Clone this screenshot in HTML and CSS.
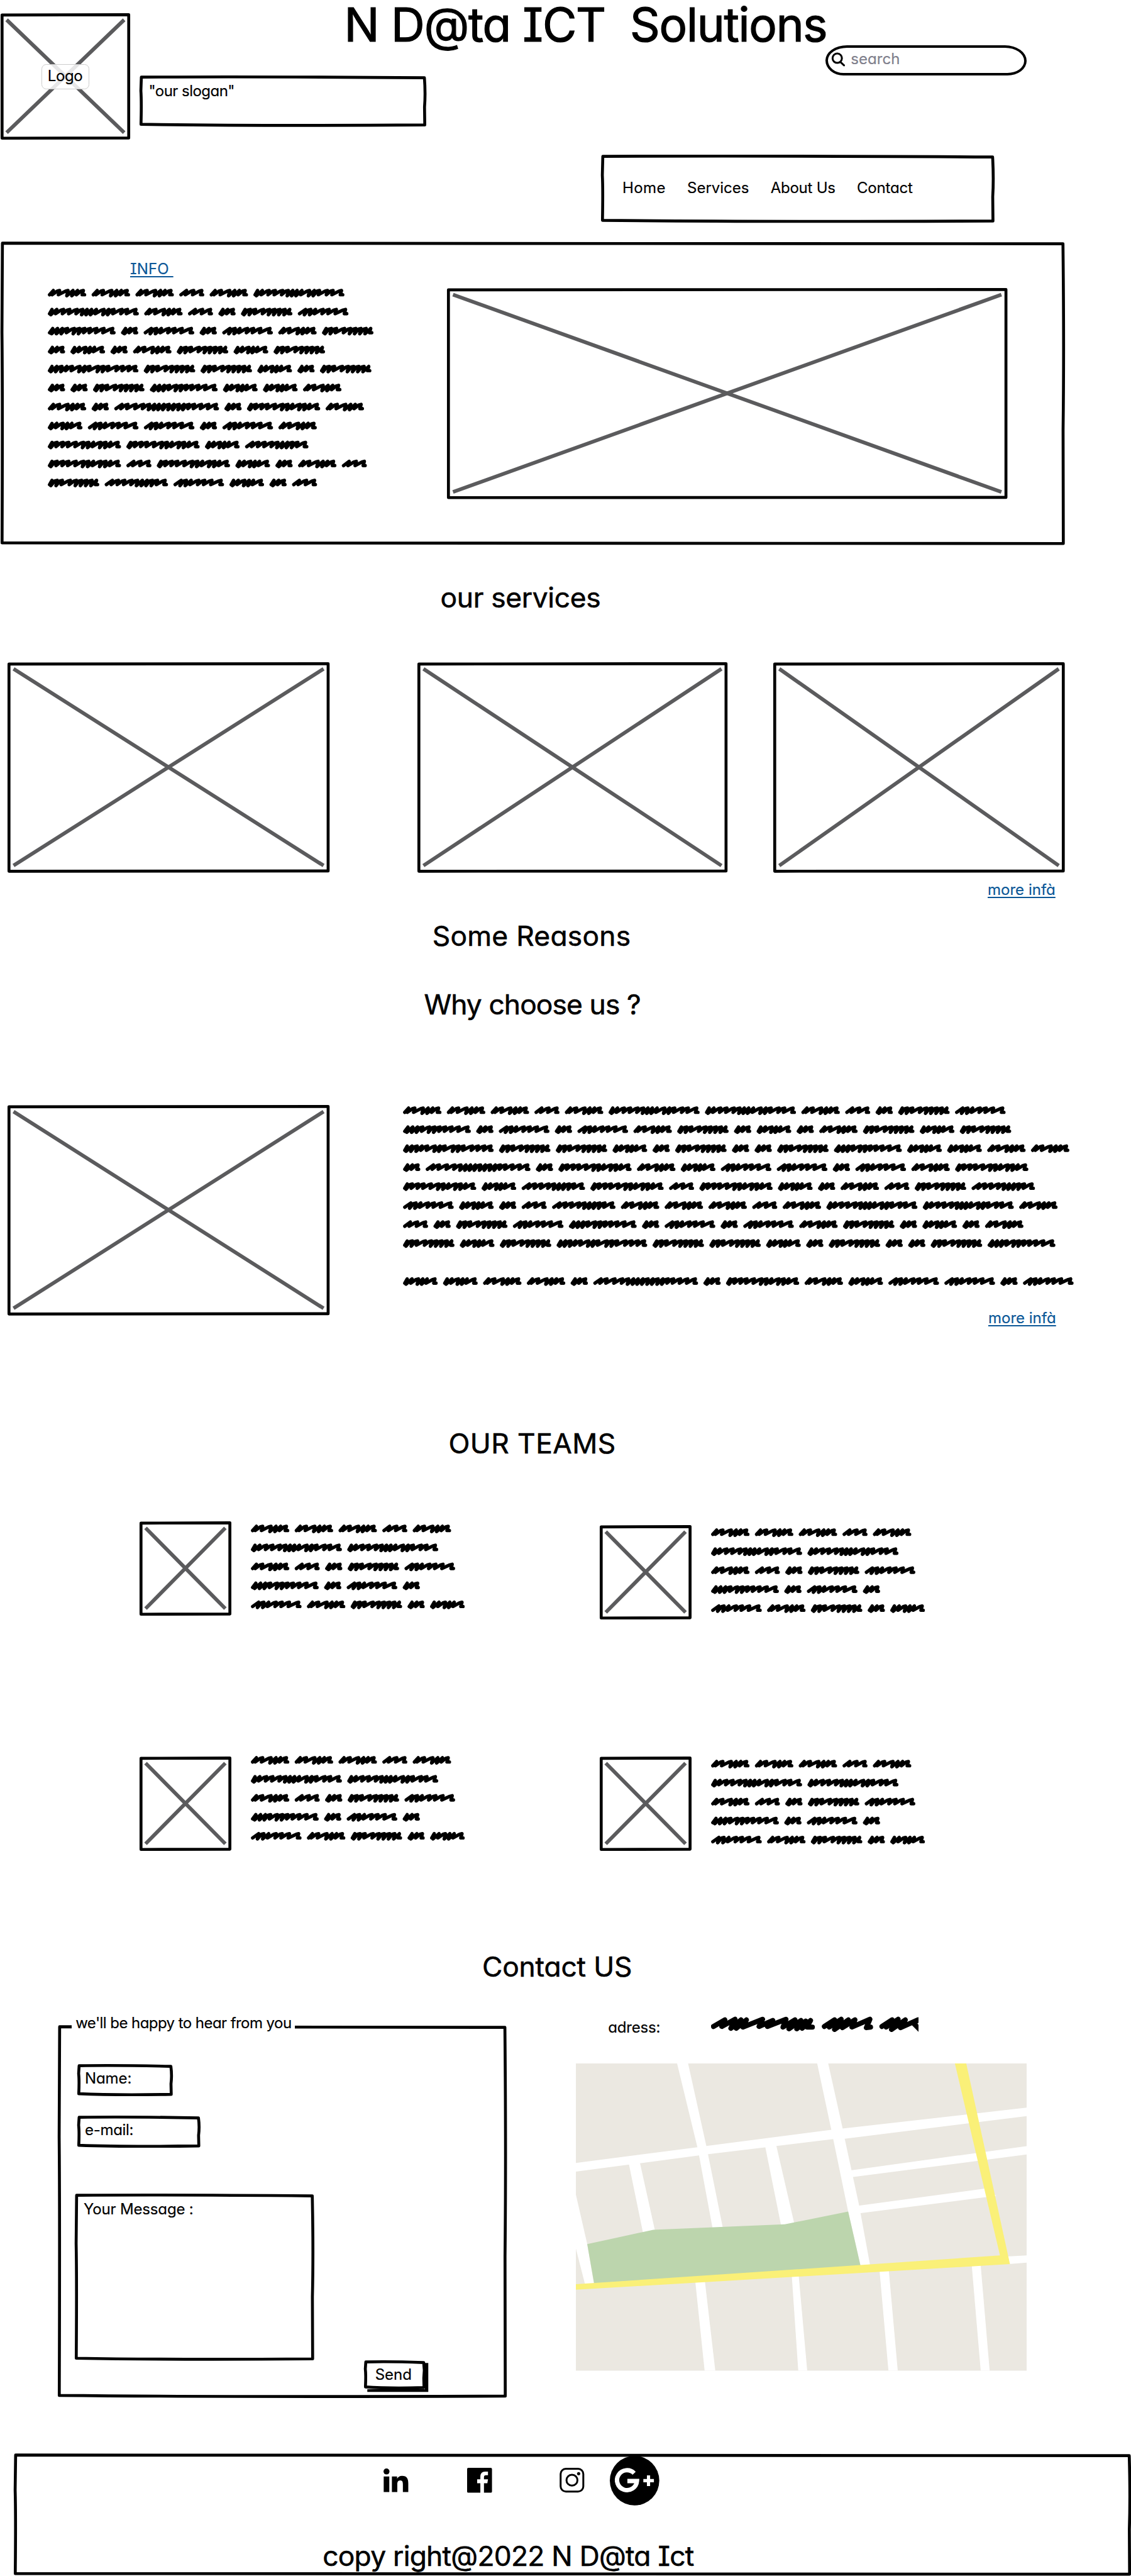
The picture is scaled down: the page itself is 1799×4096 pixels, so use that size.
FILE: index.html
```html
<!DOCTYPE html>
<html lang="en">
<head>
<meta charset="utf-8">
<title>N D@ta ICT Solutions</title>
<link rel="stylesheet" href="styles.css">
</head>
<body>
<header class="header">
  <div class="image logo"><span class="logo-label"><span data-fit="58">Logo</span></span></div>
  <div class="header-main">
    <div class="header-top">
      <h1 class="title"><span data-fit="805">N D@ta ICT&nbsp; Solutions</span></h1>
      <div class="search">
        <svg class="search-icon" viewBox="0 0 24 24"><circle cx="10.2" cy="10" r="7.8"/><path d="M15.5 16.5L21.5 22"/></svg>
        <span data-fit="82">search</span>
      </div>
    </div>
    <div class="frame slogan"><span data-fit="143">"our slogan"</span></div>
    <nav class="frame nav">
      <a data-fit="72">Home</a><a data-fit="103">Services</a><a data-fit="108">About Us</a><a data-fit="93">Contact</a>
    </nav>
  </div>
</header>

<section class="frame hero">
  <div class="hero-text">
    <a class="link info"><span data-fit="72">INFO&nbsp;</span></a>
    <svg class="scribble" data-lines="AAABAD/DABCEF/GCFCFAE/CHCAEHE/IEEHCE/CCEGHHA/ACJCKA/HFFCFA/KKHL/KBKHCAB/ELFHCB"></svg>
  </div>
  <div class="image hero-image"></div>
</section>

<section class="services">
  <h2 class="heading services-title"><span data-fit="267">our services</span></h2>
  <div class="service-row">
    <div class="image service-a"></div>
    <div class="image service-b"></div>
    <div class="image service-c"></div>
  </div>
  <a class="link more-services"><span data-fit="113">more infà</span></a>
</section>

<section class="reasons">
  <h2 class="heading reasons-title"><span data-fit="331">Some Reasons</span></h2>
  <h2 class="heading why-title"><span data-fit="361">Why choose us ?</span></h2>
  <div class="reason-row">
    <div class="image reason-image"></div>
    <div class="reason-text">
      <svg class="scribble" data-lines="AAABADDABCEF/GCFCFAECHCAEHE/IEEHCECCEGHHAA/CJCKAHFFCFAK/KHLKBKHCABEL/FHCBLAAABADDA/BCEFGCFCFAECHCA/EHEIEEHCECCEG//HHAACJCKAHFFCF"></svg>
      <a class="link more-reasons"><span data-fit="113">more infà</span></a>
    </div>
  </div>
</section>

<section class="teams">
  <h2 class="heading teams-title"><span data-fit="279">OUR TEAMS</span></h2>
  <div class="team-grid">
    <div class="member"><div class="image portrait"></div><svg class="scribble" data-lines="AAABA/DD/ABCEF/GCFC/FAECH"></svg></div>
    <div class="member member-low"><div class="image portrait"></div><svg class="scribble" data-lines="AAABA/DD/ABCEF/GCFC/FAECH"></svg></div>
    <div class="member member-raised"><div class="image portrait"></div><svg class="scribble" data-lines="AAABA/DD/ABCEF/GCFC/FAECH"></svg></div>
    <div class="member"><div class="image portrait"></div><svg class="scribble" data-lines="AAABA/DD/ABCEF/GCFC/FAECH"></svg></div>
  </div>
</section>

<section class="contact">
  <h2 class="heading contact-title"><span data-fit="250">Contact US</span></h2>
  <div class="contact-row">
    <form class="frame form">
      <div class="legend"><span data-fit="360">we'll be happy to hear from you</span></div>
      <div class="frame field name"><span data-fit="78">Name:</span></div>
      <div class="frame field email"><span data-fit="81">e-mail:</span></div>
      <div class="frame message"><span data-fit="183">Your Message :</span></div>
      <div class="frame send"><span data-fit="61">Send</span></div>
    </form>
    <div class="place">
      <div class="address">
        <span class="address-label"><span data-fit="87">adress:</span></span>
        <svg class="address-scribble" viewBox="0 0 346 26"><path d="M4 17L23 6L18 17L40 5L33 20L50 6L42 20L59 6L53 18L86 5L80 17L103 7L94 17L125 5L120 18L140 6L130 21L150 7L143 21L158 8L152 20L166 7L160 18L169 18M189 17L206 6L197 18L217 5L206 22L229 6L219 19L240 6L235 18L265 5L259 19L266 18M285 17L302 6L292 18L312 5L301 22L324 6L316 19L345 6L338 12L350 24"/></svg>
      </div>
      <svg class="map" viewBox="105 454 1310 1056" preserveAspectRatio="none">
        <path class="land" d="M105 454H1415V1510H105z"/>
        <g class="road">
          <path d="M105 796L458 742L484 738L847 682L880 678L1415 606V635L886 713L853 714L688 738L490 766L105 826z"/>
          <path d="M399 454H431L484 738L532 1020L502 1020L464 778L458 742z"/>
          <path d="M806 454H838L880 678L886 713L928 943L960 1150H932L896 963L847 682z"/>
          <path d="M105 905L138 1075L158 1215H132L105 1090z"/>
          <path d="M259 800L291 795L335 1030L300 1036z"/>
          <path d="M655 740L687 735L739 1002L701 1010z"/>
          <path d="M900 822L1415 738V767L900 846z"/>
          <path d="M922 944L1300 883L1326 909L922 970z"/>
          <path d="M452 1205H480L510 1510H479z"/>
          <path d="M732 1180H752L777 1510H751z"/>
          <path d="M987 1165H1014L1040 1510H1013z"/>
          <path d="M1255 1148H1281L1307 1510H1281z"/>
          <path d="M1355 1118L1415 1114V1139L1362 1144z"/>
        </g>
        <path class="park" d="M138 1075L330 1026L712 1007L896 963L932 1150L158 1210z"/>
        <path class="highway" d="M1206 454H1239L1366 1144L105 1232V1213L932 1147L1337 1114z"/>
      </svg>
    </div>
  </div>
</section>

<footer class="frame footer">
  <div class="social">
    <svg class="linkedin" viewBox="87 100 126 120"><circle cx="102" cy="115" r="15"/><path d="M88 140h28v78h-28zM129 140h26v11c5-8 13-14 25-14 24 0 31 14 31 38v43h-27v-38c0-11-2-20-13-20-12 0-15 9-15 20v38h-27z"/></svg>
    <svg class="facebook" viewBox="507 99 124 124"><path d="M513 99h112q6 0 6 6v112q0 6-6 6h-34v-47h17l3-20h-20v-10q0-10 10-10h10v-18h-14q-24 0-24 26v12h-16v20h16v47h-60q-6 0-6-6v-112q0-6 6-6z"/></svg>
    <svg class="instagram" viewBox="968 99 125 125"><rect x="973.5" y="104" width="114" height="114" rx="26"/><circle cx="1030.5" cy="161" r="27.5"/><circle class="dot" cx="1064" cy="128" r="8"/></svg>
    <svg class="google" viewBox="1218 40 248 248"><circle cx="1342" cy="164" r="124"/><path d="M1340 127A50 50 0 1 0 1354 166H1306"/><path class="plus" d="M1386 164h53M1412 138v53"/></svg>
  </div>
  <div class="heading copyright"><span data-fit="619">copy right@2022 N D@ta Ict</span></div>
</footer>
<script src="script.js"></script>
</body>
</html>
```
FILE: styles.css
```css
/* 1rem is ten design units */
html { font-size: 9.5387px; }
* { box-sizing: border-box; }
body {
  margin: 0;
  width: 188.6rem;
  height: 429.4rem;
  overflow: hidden;
  background: #fff;
  color: #000;
  font-family: Inter, "Open Sans", sans-serif;
  font-size: 2.52rem;
  font-weight: 400;
  line-height: 3rem;
  font-feature-settings: "cv11", "cv08";
  white-space: nowrap;
  -webkit-text-stroke: .02rem;
}
h1, h2 { margin: 0; }
[data-fit] { display: inline-block; white-space: pre; }
svg { display: block; flex: none; overflow: visible; }

.frame, .image { position: relative; flex: none; }
.outline {
  position: absolute;
  inset: 0;
  width: 100%;
  height: 100%;
  fill: none;
  stroke: #000;
  stroke-width: 4.9;
  stroke-linejoin: round;
  pointer-events: none;
}
.outline .cross { stroke: #5b5b5d; stroke-width: 6.2; }
.heading { font-size: 4.65rem; font-weight: 400; line-height: 5.6rem; -webkit-text-stroke: .06rem; }
.link {
  display: block;
  color: #0b5797;
  text-decoration: underline;
  text-decoration-thickness: .22rem;
  text-underline-offset: .36rem;
  text-decoration-skip-ink: none;
}
.link span { text-decoration: inherit; }
.scribble, .address-scribble path {
  fill: none;
  stroke: #000;
  stroke-linecap: round;
  stroke-linejoin: round;
}
.scribble { stroke-width: 5.7; }

.header { display: flex; height: 40.2rem; }
.logo {
  display: flex;
  align-items: center;
  justify-content: center;
  width: 21.6rem;
  height: 21.1rem;
  margin: 2.25rem 0 0 .1rem;
}
.logo-label {
  position: relative;
  z-index: 1;
  height: 4.2rem;
  width: 8rem;
  padding: .4rem 0 0 .95rem;
  border: .2rem solid #ccc;
  border-radius: .8rem;
  background: rgba(255, 255, 255, .85);
}
.header-top { display: flex; height: 12.6rem; }
.title {
  width: 80.2rem;
  margin: -.27rem 0 0 35.7rem;
  font-size: 7.8rem;
  font-weight: 400;
  line-height: 9rem;
  -webkit-text-stroke: .13rem;
}
.search {
  display: flex;
  width: 33.6rem;
  height: 5rem;
  margin-top: 7.6rem;
  padding: .35rem 0 0 .6rem;
  border: .42rem solid #000;
  border-radius: 3.6rem 3.6rem 3.2rem 3rem / 2.5rem 2.6rem 2.4rem 2.5rem;
  color: #80808c;
}
.search-icon {
  width: 2.4rem;
  height: 2.4rem;
  margin: .38rem .85rem 0 0;
  fill: none;
  stroke: #000;
  stroke-width: 3.2;
  stroke-linecap: round;
}
.slogan { width: 47.8rem; height: 8.5rem; margin-left: 1.6rem; padding: 1.18rem 0 0 1.5rem; }
.nav {
  display: flex;
  gap: 3.6rem;
  width: 65.6rem;
  height: 11.3rem;
  margin: 4.7rem 0 0 78.5rem;
  padding: 4.04rem 0 0 3.6rem;
}

.hero { display: flex; width: 177.45rem; height: 50.6rem; margin: .05rem 0 0 .1rem; }
.hero-text { width: 74.4rem; padding: 3.14rem 0 0 7.9rem; }
.info { margin: 0 0 .94rem 13.7rem; }
.hero-image { width: 93.45rem; height: 35.2rem; margin-top: 7.75rem; }

.services-title { margin: 6.06rem 0 0 73.45rem; }
.service-row { display: flex; margin-top: 7.89rem; }
.service-row .image { height: 35.1rem; }
.service-a { width: 53.7rem; margin-left: 1.3rem; }
.service-b { width: 51.7rem; margin-left: 14.6rem; }
.service-c { width: 48.6rem; margin-left: 7.7rem; }
.more-services { margin: 1.35rem 0 0 164.7rem; }

.reasons-title { margin: 3.46rem 0 0 72.1rem; }
.why-title { margin: 5.83rem 0 0 70.7rem; }
.reason-row { display: flex; height: 36.98rem; margin-top: 13.87rem; }
.reason-image { width: 53.7rem; height: 35.1rem; margin-left: 1.3rem; }
.reason-text { margin: -.65rem 0 0 12.2rem; }
.more-reasons { margin: 3.03rem 0 0 97.6rem; }

.teams-title { margin: 16.72rem 0 0 74.8rem; }
.team-grid {
  display: grid;
  grid-template: 39.2rem 15.75rem / 76.75rem 60rem;
  margin: 10.1rem 0 0 23.3rem;
}
.member { display: flex; }
.member-low { padding-top: .6rem; }
.portrait { width: 15.3rem; height: 15.75rem; }
.member .scribble { margin: -.28rem 0 0 3.2rem; }
.member-raised .scribble { margin-top: -.92rem; }

.contact-title { margin: 16.53rem 0 0 80.4rem; }
.contact-row { display: flex; height: 62.1rem; margin-top: 6.92rem; }
.form { width: 74.85rem; height: 62.1rem; margin-left: 9.65rem; padding-top: 6.45rem; }
.legend {
  position: absolute;
  z-index: 1;
  top: -1.79rem;
  left: 2.35rem;
  width: 37.15rem;
  padding-left: .6rem;
  background: #fff;
}
.field { height: 5.3rem; margin-left: 3.2rem; padding: .96rem 0 0 1.3rem; }
.name { width: 15.9rem; }
.email { width: 20.5rem; margin-top: 3.3rem; }
.message { width: 39.9rem; height: 27.8rem; margin: 7.75rem 0 0 2.8rem; padding: 1.1rem 0 0 1.5rem; }
.send {
  width: 10.25rem;
  height: 4.8rem;
  margin-left: 51rem;
  padding: .9rem 0 0 1.9rem;
  background: #fff;
  box-shadow: .55rem .45rem 0 #000;
}
.place { margin-left: 11.5rem; }
.address { display: flex; height: 6.4rem; }
.address-label { width: 17.2rem; margin: -1.03rem 0 0 5.4rem; }
.address-scribble {
  width: 34.6rem;
  height: 2.6rem;
  margin-top: -1.5rem;
  overflow: hidden;
}
.address-scribble path { stroke-width: 8.4; }
.map { width: 75.2rem; height: 51.2rem; overflow: hidden; }
.land { fill: #ebe8e1; }
.road { fill: #fff; }
.park { fill: #bcd5ad; }
.highway { fill: #faf078; }

.footer { width: 186.3rem; height: 20.4rem; margin: 9.3rem 0 0 2.3rem; padding-top: .35rem; }
.social { display: flex; align-items: center; height: 8.25rem; margin-left: 61.6rem; }
.linkedin { width: 4.2rem; height: 4rem; }
.facebook { width: 4.15rem; height: 4.15rem; margin-left: 9.8rem; }
.instagram { width: 4.15rem; height: 4.15rem; margin-left: 11.25rem; fill: none; stroke: #000; stroke-width: 9.5; }
.instagram .dot { fill: #000; stroke: none; }
.google { width: 8.25rem; height: 8.25rem; margin-left: 4.2rem; }
.google path { fill: none; stroke: #fff; stroke-width: 22; }
.google .plus { stroke-width: 16; }
.copyright { margin: 5.7rem 0 0 51.5rem; }
```
FILE: script.js
```js
const NS = 'http://www.w3.org/2000/svg';
const UNIT = parseFloat(getComputedStyle(document.documentElement).fontSize) / 10;

// Word shapes: [width, peak positions], in thirds of a design unit.
const WORDS = {
  A: [193, 31, 62, 104, 129, 152, 181],
  B: [126, 40, 76, 116],
  C: [87, 26, 50, 78],
  D: [456, 24, 48, 82, 113, 150, 178, 200, 222, 246, 284, 308, 334, 374, 402, 444],
  E: [258, 24, 50, 76, 116, 146, 172, 198, 224, 247],
  F: [254, 42, 68, 92, 130, 160, 196, 242],
  G: [340, 28, 52, 76, 102, 136, 162, 188, 216, 248, 284, 328],
  H: [174, 24, 48, 80, 102, 124, 163],
  I: [454, 24, 48, 74, 98, 126, 164, 188, 214, 256, 282, 308, 350, 380, 412, 443],
  J: [525, 42, 72, 112, 150, 180, 205, 228, 252, 278, 302, 328, 352, 378, 405, 440, 476, 514],
  K: [367, 24, 50, 80, 108, 145, 182, 208, 232, 268, 294, 318, 355],
  L: [318, 42, 72, 104, 140, 168, 192, 216, 242, 268, 306]
};
const GAP = 8.7;
const LINE = 31.65;

function wordPath(code, x, y) {
  const [width, ...peaks] = WORDS[code];
  const at = (px, py) => (x + px / 3).toFixed(1) + ' ' + (y + py / 3).toFixed(1);
  let d = 'M' + at(9, 8);
  let low = 9;
  peaks.forEach((p, i) => {
    const next = peaks[i + 1] || width;
    if (p - low > 34) d += 'L' + at(p - 15, -10);
    d += 'L' + at(p - 3, -13);
    low = Math.max(9, p - 9);
    d += 'L' + at(low, next - p < 27 && i < peaks.length - 1 ? 13 : 8);
  });
  return d + 'L' + at(width - 9, 8);
}

document.querySelectorAll('.scribble').forEach(svg => {
  const lines = svg.dataset.lines.split('/');
  let d = '', max = 0;
  lines.forEach((line, row) => {
    let x = 0;
    for (const code of line) {
      d += wordPath(code, x, (row + 0.5) * LINE);
      x += WORDS[code][0] / 3 + GAP;
    }
    max = Math.max(max, x - GAP);
  });
  const height = lines.length * LINE;
  svg.setAttribute('viewBox', `0 0 ${max} ${height}`);
  svg.setAttribute('width', max * UNIT);
  svg.setAttribute('height', height * UNIT);
  const path = document.createElementNS(NS, 'path');
  path.setAttribute('d', d);
  svg.append(path);
});

// Hand-drawn outlines, with a cross for image placeholders.
document.querySelectorAll('.frame, .image').forEach(box => {
  const r = box.getBoundingClientRect();
  const w = r.width / UNIT, h = r.height / UNIT;
  const svg = document.createElementNS(NS, 'svg');
  svg.setAttribute('class', 'outline');
  svg.setAttribute('viewBox', `0 0 ${w} ${h}`);
  svg.innerHTML = box.classList.contains('image')
    ? `<path class="cross" d="M10 11L${w - 10} ${h - 12}M${w - 10} 11L10 ${h - 12}"/>
       <path d="M2.4 3L${w - 2.4} 2.4V${h - 3}L2.4 ${h - 2.6}z"/>`
    : `<path d="M3 2.8Q${w * .4} 1.6 ${w - 3} 3.8Q${w - 1} ${h * .35} ${w - 2.8} ${h * .62}L${w - 2.4} ${h - 2.5}Q${w * .4} ${h - .8} 2.4 ${h - 3.6}Q3.4 ${h * .5} 2.2 ${h * .3}z"/>`;
  box.prepend(svg);
});

// Spread each label over its design width.
document.querySelectorAll('[data-fit]').forEach(el => {
  const gap = (el.dataset.fit * UNIT - el.getBoundingClientRect().width) / el.textContent.length;
  el.style.letterSpacing = gap.toFixed(3) + 'px';
});
```
